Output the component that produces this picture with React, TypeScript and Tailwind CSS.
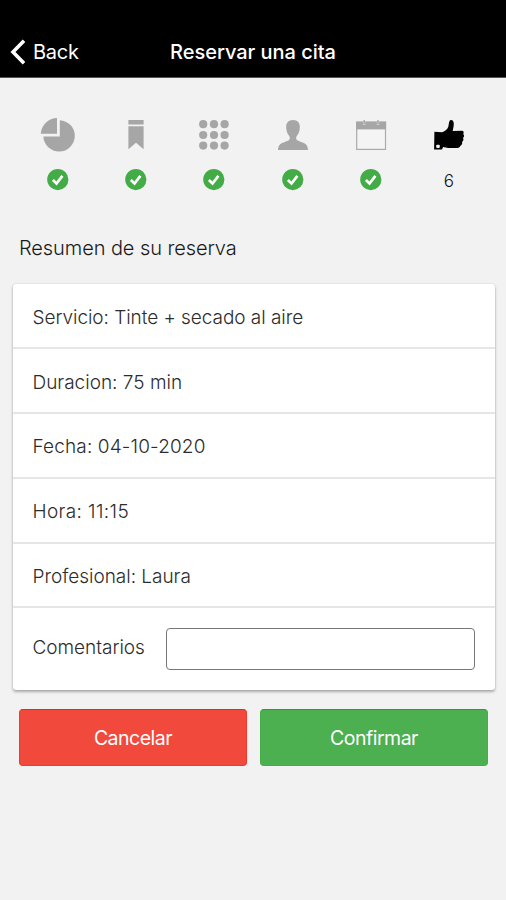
import type { ReactNode } from "react";

const grey = "#a6a6a6";

function PieIcon() {
  return (
    <svg width="36" height="36" viewBox="0 0 36 36" fill={grey}>
      <path d="M17 1V16.8H.8A16.6 16.6 0 0 1 17 1Z" />
      <path d="M19.8 3.2A15.7 15.7 0 1 1 3.4 19.6H19.8Z" />
    </svg>
  );
}

function BookmarkIcon() {
  return (
    <svg width="36" height="36" viewBox="0 0 36 36" fill={grey}>
      <path d="M10.4 3H25.6V7.6H10.4ZM10.4 9.3H25.6V32.2L18 25.8L10.4 32.2Z" />
    </svg>
  );
}

function GridIcon() {
  return (
    <svg width="36" height="36" viewBox="0 0 36 36" fill={grey}>
      {[7.2, 18, 28.6].map((y) =>
        [7.2, 18, 28.6].map((x) => <circle key={`${x}-${y}`} cx={x} cy={y} r="4.1" />),
      )}
    </svg>
  );
}

function PersonIcon() {
  return (
    <svg width="36" height="36" viewBox="0 0 36 36" fill={grey}>
      <path d="M18 3C13.7 3 11 5.8 11.2 10.2C11.3 13.6 12.2 16.6 14.1 18.8C15.2 20.2 15.3 22.5 13.4 23.6C11.2 24.8 7.2 25.6 5.2 27.2C3.6 28.6 3.2 30.6 3 33H33C32.8 30.6 32.4 28.6 30.8 27.2C28.8 25.6 24.8 24.8 22.6 23.6C20.7 22.5 20.8 20.2 21.9 18.8C23.8 16.6 24.7 13.6 24.8 10.2C25 5.8 22.3 3 18 3Z" />
    </svg>
  );
}

function CalendarIcon() {
  return (
    <svg width="36" height="36" viewBox="0 0 36 36">
      <rect x="3.7" y="5.2" width="28.8" height="27.2" fill="#f4f4f4" stroke="#ababab" strokeWidth="1.2" />
      <path d="M3.1 4.6H33.1V12.4H3.1Z" fill={grey} />
      <path d="M10 4.6H12.4V8H10ZM23.8 4.6H26.2V8H23.8Z" fill="#d8d8d8" />
      <path d="M10.5 3H11.9V7.2H10.5ZM24.3 3H25.7V7.2H24.3Z" fill={grey} />
    </svg>
  );
}

function ThumbIcon() {
  return (
    <svg width="36" height="36" viewBox="0 0 36 36" fill="#000">
      <path d="M3.4 14.7L11 15.2C13.5 14.8 16.4 12.5 17.3 9.8C18 7.6 17.7 3.5 19.8 3.1C22.5 2.7 23.2 6.2 22.6 9.2L21.7 13.9L31 13.7C32.6 13.7 33.2 15.5 32.2 17.1C33.4 18.2 33.3 20 32 21C32.9 22.4 32.4 24.1 31.1 24.8C31.6 26.7 30.6 28.5 29.4 28.8C29 30.2 27.4 31.1 25.5 31.1H17.2L12.1 29.9L11 32.4L3.1 32.6Z" />
      <rect x="5.2" y="27.8" width="3.6" height="3.2" rx="1" fill="#f2f2f2" />
    </svg>
  );
}

function Check() {
  return (
    <svg width="22" height="22" viewBox="0 0 22 22">
      <circle cx="10.8" cy="10.6" r="10.6" fill="#43ac47" />
      <path d="M5.9 11L9.5 14.5L15.4 6.9" fill="none" stroke="#fff" strokeWidth="2.7" />
    </svg>
  );
}

function Step({ icon, children }: { icon: ReactNode; children: ReactNode }) {
  return (
    <div className="flex flex-1 flex-col items-center">
      {icon}
      <div className="mt-[14.5px] flex h-[24px] items-center text-[17px] font-light text-[#111]">{children}</div>
    </div>
  );
}

function Row({ label, className }: { label: string; className: string }) {
  return (
    <div className="flex h-[64.9px] items-center border-b-2 border-[#e6e6e6] pl-[19.5px] pr-5 pt-[5px]">
      <span className={`whitespace-nowrap ${className}`}>{label}</span>
    </div>
  );
}

export default function App() {
  return (
    <div className="flex h-[900px] w-[506px] flex-col overflow-hidden bg-[#f2f2f2] font-['Inter','Liberation_Sans',sans-serif]">
      <header className="grid h-[78px] shrink-0 grid-cols-[1fr_auto_1fr] items-end border-b border-[#555] bg-black pb-[12px] text-white">
        <div className="flex items-center pl-[10px]">
          <svg width="16" height="26" viewBox="0 0 16 26" fill="none" stroke="#fff" strokeWidth="3.6">
            <path d="M14 1.8L3 13L14 24.2" />
          </svg>
          <span className="ml-[7px] text-[20px] leading-[26px] tracking-[-0.25px]">Back</span>
        </div>
        <h1 className="text-[20px] font-medium leading-[26px] tracking-[-0.03px]">Reservar una cita</h1>
        <div />
      </header>

      <div className="ml-[19px] mt-[39px] flex w-[469px]">
        <Step icon={<PieIcon />}><Check /></Step>
        <Step icon={<BookmarkIcon />}><Check /></Step>
        <Step icon={<GridIcon />}><Check /></Step>
        <Step icon={<PersonIcon />}><Check /></Step>
        <Step icon={<CalendarIcon />}><Check /></Step>
        <Step icon={<ThumbIcon />}><span className="pt-[4px]">6</span></Step>
      </div>

      <h2 className="ml-[19px] mt-[42.5px] text-[20px] font-light leading-[28px] tracking-[-0.08px] text-[#1a1a1a]">
        Resumen de su reserva
      </h2>

      <main className="ml-[13px] mt-[22px] h-[406px] w-[482px] shrink-0 rounded-[3px] bg-white text-[19px] font-light text-[#2c2c2c] shadow-[0_2px_3px_rgba(0,0,0,0.28),0_0_2px_rgba(0,0,0,0.15)]">
        <Row label="Servicio: Tinte + secado al aire" className="tracking-[-0.05px]" />
        <Row label="Duracion: 75 min" className="tracking-[0px]" />
        <Row label="Fecha: 04-10-2020" className="tracking-[0.14px]" />
        <Row label="Hora: 11:15" className="tracking-[0.38px]" />
        <Row label="Profesional: Laura" className="tracking-[-0.02px]" />
        <label className="flex h-[81.5px] items-center pl-[19.5px] pr-5">
          <span className="w-[133.5px] pb-[1px] tracking-[-0.02px]">Comentarios</span>
          <input className="h-[42px] flex-1 rounded-[4px] border-[1.5px] border-[#777] bg-white px-2 outline-none" />
        </label>
      </main>

      <div className="ml-[19px] mt-[19px] flex gap-[13px] text-[19.5px] tracking-[-0.5px] text-white">
        <button className="h-[57px] w-[228px] rounded-[4px] border border-[#f23a2c] border-t-[#dd2c20] bg-[#f1493c] pt-[2px]">Cancelar</button>
        <button className="h-[57px] w-[228px] rounded-[4px] border border-[#43ad48] border-t-[#2f9a35] bg-[#4caf50] pt-[2px]">Confirmar</button>
      </div>
    </div>
  );
}
